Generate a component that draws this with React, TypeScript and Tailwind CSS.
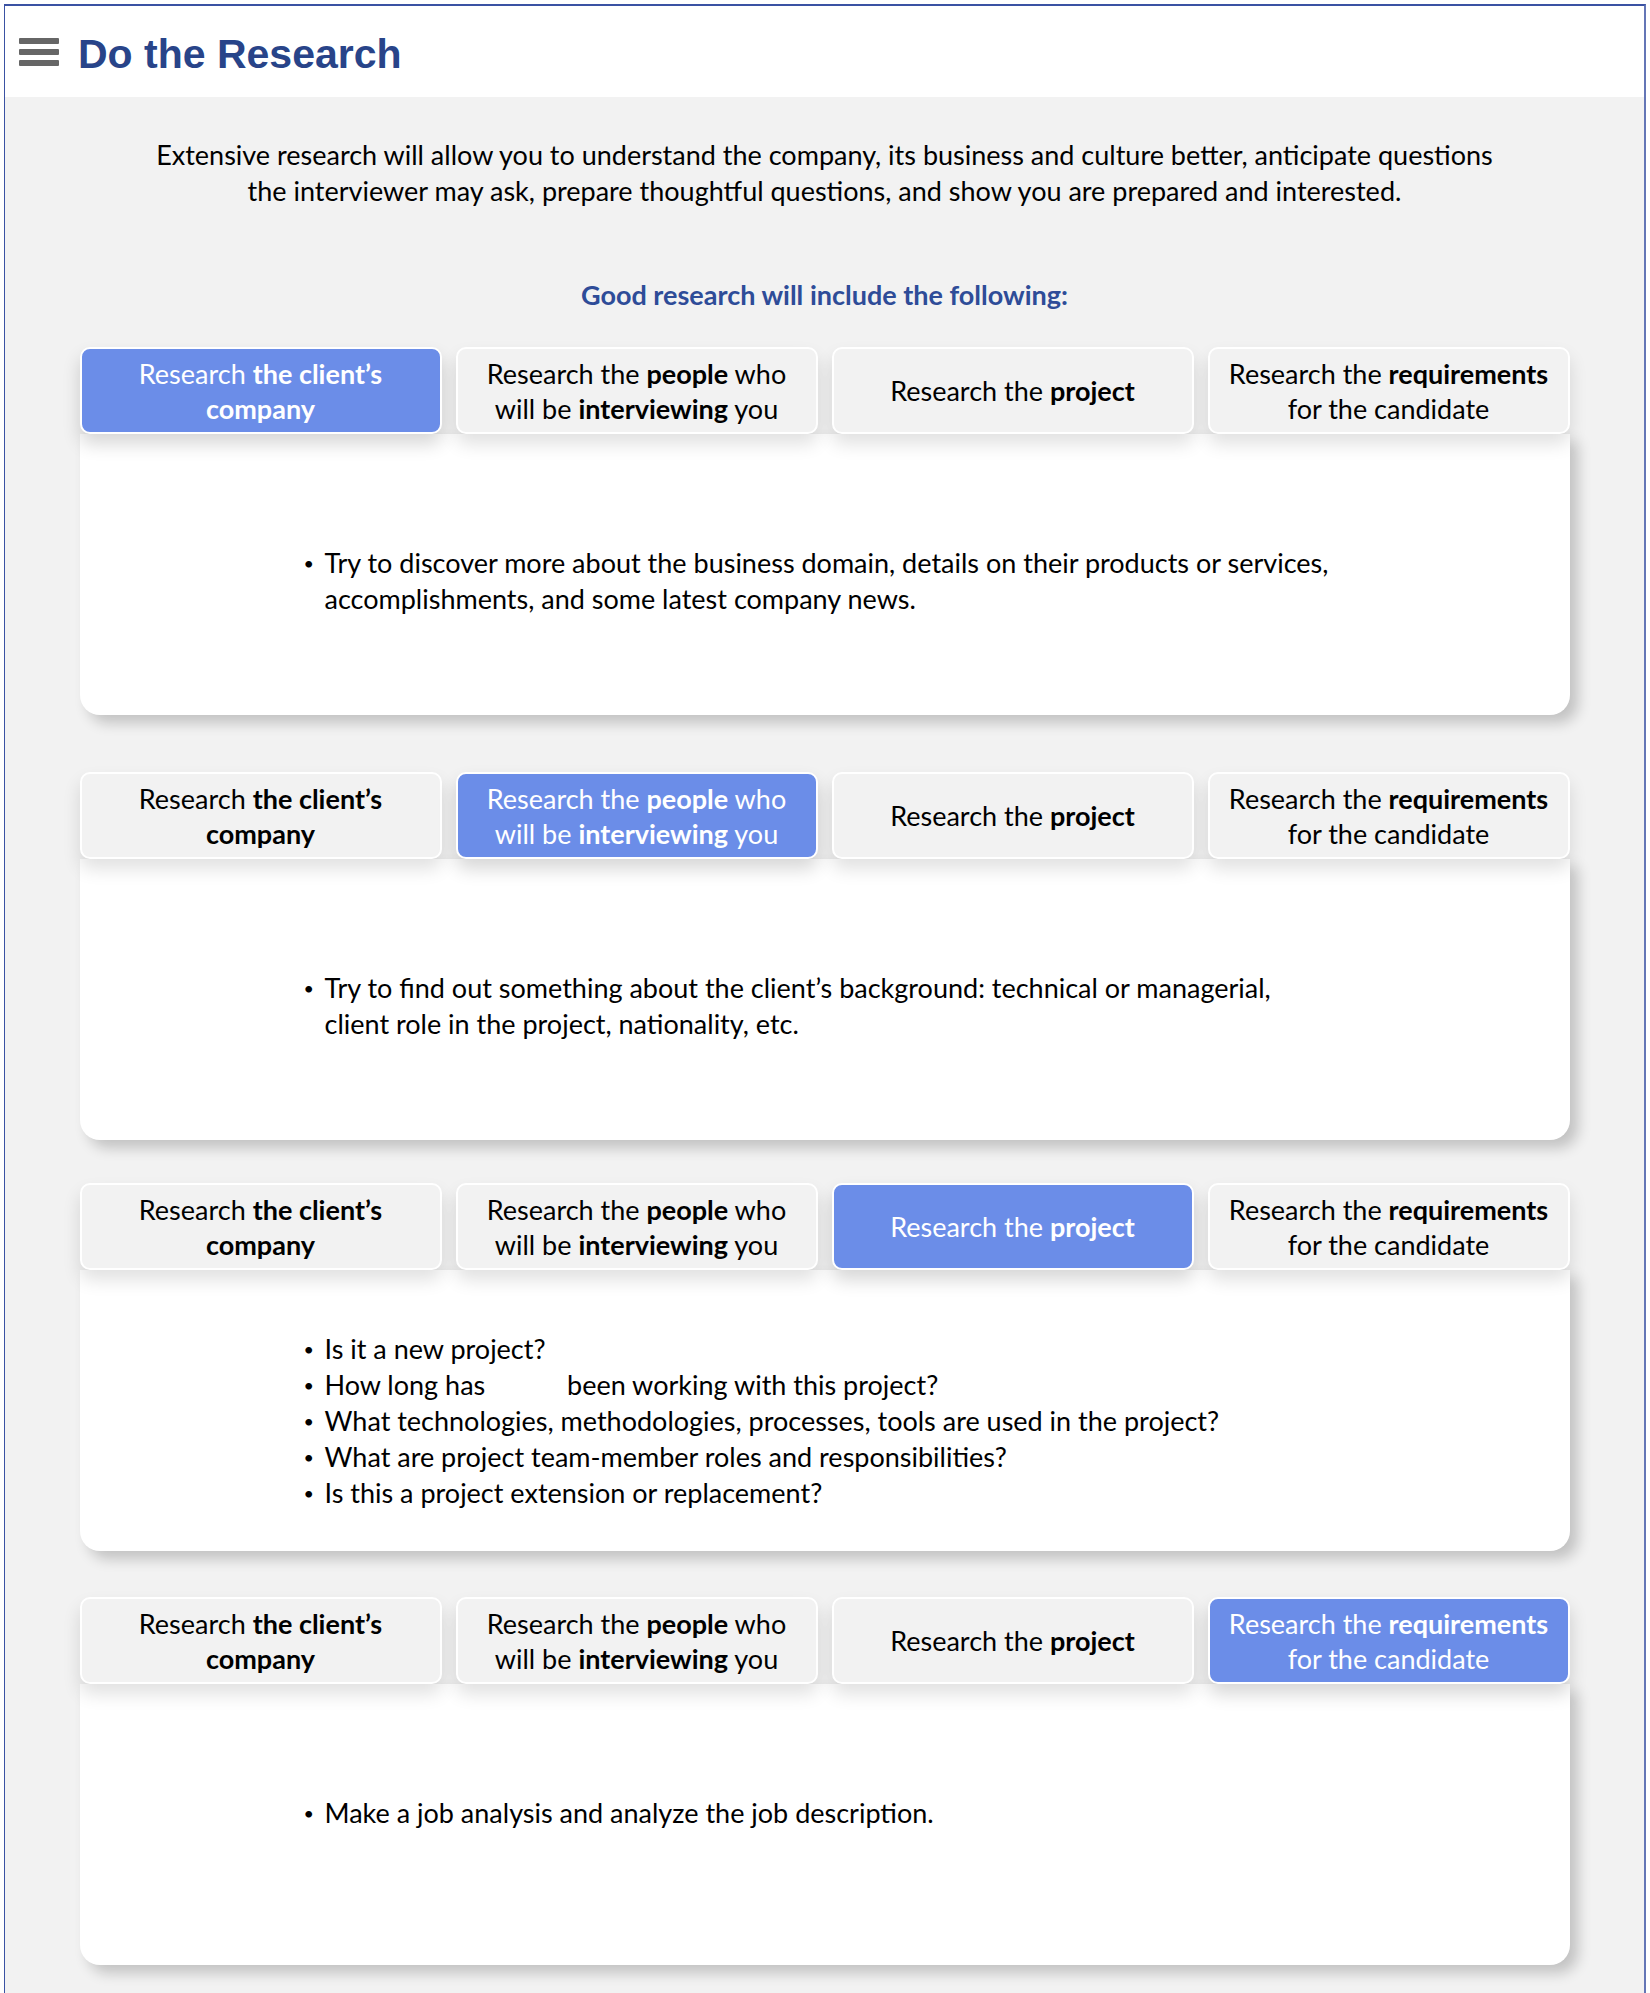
import React from "react";

type Block = {
  active: number;
  mt: string;
  pt: string;
  items: React.ReactNode[];
};

const tabLabels: React.ReactNode[] = [
  <>
    Research <b>the client’s</b>
    <br />
    <b>company</b>
  </>,
  <>
    Research the <b>people</b> who
    <br />
    will be <b>interviewing</b> you
  </>,
  <>
    Research the <b>project</b>
  </>,
  <>
    Research the <b>requirements</b>
    <br />
    for the candidate
  </>,
];

const blocks: Block[] = [
  {
    active: 0,
    mt: "mt-0",
    pt: "pt-[111px]",
    items: [
      <>
        Try to discover more about the business domain, details on their products or services,
        <br />
        accomplishments, and some latest company news.
      </>,
    ],
  },
  {
    active: 1,
    mt: "mt-[57px]",
    pt: "pt-[111px]",
    items: [
      <>
        Try to find out something about the client’s background: technical or managerial,
        <br />
        client role in the project, nationality, etc.
      </>,
    ],
  },
  {
    active: 2,
    mt: "mt-[43px]",
    pt: "pt-[61px]",
    items: [
      <>Is it a new project?</>,
      <>
        How long has <span className="inline-block w-[68px]" /> been working with this project?
      </>,
      <>What technologies, methodologies, processes, tools are used in the project?</>,
      <>What are project team-member roles and responsibilities?</>,
      <>Is this a project extension or replacement?</>,
    ],
  },
  {
    active: 3,
    mt: "mt-[46px]",
    pt: "pt-[111px]",
    items: [<>Make a job analysis and analyze the job description.</>],
  },
];

const TabRow: React.FC<{ active: number }> = ({ active }) => (
  <div className="flex gap-[14px]">
    {tabLabels.map((label, i) => (
      <div
        key={i}
        className={
          i === active
            ? "w-[362px] h-[87px] flex items-center justify-center text-center whitespace-nowrap rounded-[10px] border-2 border-white bg-[#6b8de8] text-white leading-[35px] shadow-[0_10px_18px_rgba(0,0,0,0.16)]"
            : "w-[362px] h-[87px] flex items-center justify-center text-center whitespace-nowrap rounded-[10px] border-2 border-white bg-[#f2f2f2] text-black leading-[35px] shadow-[0_10px_18px_rgba(0,0,0,0.12)]"
        }
      >
        <div>{label}</div>
      </div>
    ))}
  </div>
);

const ResearchBlock: React.FC<{ block: Block }> = ({ block }) => (
  <div className={`${block.mt} w-[1490px]`}>
    <TabRow active={block.active} />
    <div className="h-[281px] bg-white rounded-b-[20px] shadow-[8px_8px_14px_rgba(0,0,0,0.2)]">
      <ul className={`${block.pt} pl-[224px] leading-[36px]`}>
        {block.items.map((item, i) => (
          <li key={i} className="flex">
            <span className="w-[21px] shrink-0 text-[18px]">•</span>
            <span>{item}</span>
          </li>
        ))}
      </ul>
    </div>
  </div>
);

export default function App() {
  return (
    <div className="bg-white pt-[4px] px-[4px] font-['Lato',sans-serif] text-[27px] text-black">
      <div className="border-t-2 border-l border-r-2 border-t-[#3a52a3] border-l-[#3a52a3] border-r-[#6476b6]">
        {/* Header */}
        <div className="h-[91px] bg-white flex items-center pl-[14px]">
          <div className="flex flex-col gap-[5px] w-[40px]">
            <div className="h-[6px] bg-[#666666] rounded-[1px]" />
            <div className="h-[6px] bg-[#666666] rounded-[1px]" />
            <div className="h-[6px] bg-[#666666] rounded-[1px]" />
          </div>
          <h1 className="ml-[19px] mt-[6px] font-['Liberation_Sans',Arial,sans-serif] font-bold text-[41px] text-[#284489] leading-none">
            Do the Research
          </h1>
        </div>

        {/* Body */}
        <div className="bg-[#f2f2f2] flex flex-col items-center pt-[40px] pb-[28px]">
          <p className="text-center leading-[36px]">
            Extensive research will allow you to understand the company, its business and culture better, anticipate questions
            <br />
            the interviewer may ask, prepare thoughtful questions, and show you are prepared and interested.
          </p>
          <h2 className="mt-[68px] font-bold text-[#2e4c98] leading-[36px]">
            Good research will include the following:
          </h2>
          <div className="mt-[34px] flex flex-col">
            {blocks.map((b, i) => (
              <ResearchBlock key={i} block={b} />
            ))}
          </div>
        </div>
      </div>
    </div>
  );
}
